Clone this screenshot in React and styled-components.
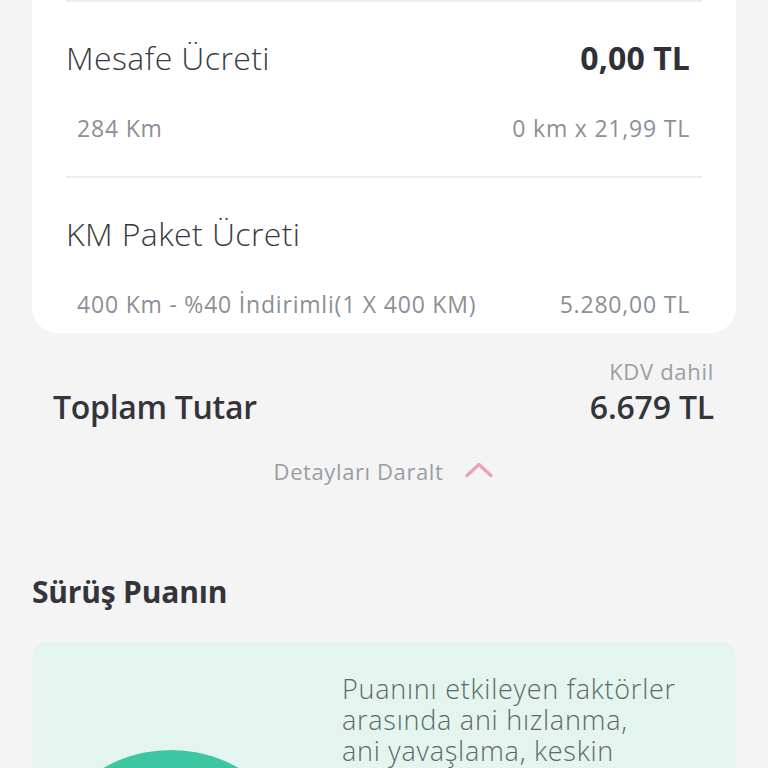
import React from "react";
import styled, { createGlobalStyle } from "styled-components";

const GlobalStyle = createGlobalStyle`
  html, body {
    margin: 0;
    padding: 0;
    background: #f4f4f5;
    font-family: "Open Sans", "Noto Sans", sans-serif;
    overflow: hidden;
  }
`;

const priceItems = [
  {
    title: "Mesafe Ücreti",
    value: "0,00 TL",
    detail: "284 Km",
    detailValue: "0 km x 21,99 TL",
  },
  {
    title: "KM Paket Ücreti",
    value: "",
    detail: "400 Km - %40 İndirimli(1 X 400 KM)",
    detailValue: "5.280,00 TL",
  },
];

const scoreLines = [
  "Puanını etkileyen faktörler",
  "arasında ani hızlanma,",
  "ani yavaşlama, keskin",
];

const App = () => {
  return (
    <Page>
      <GlobalStyle />
      <PriceCard>
        {priceItems.map((item) => (
          <PriceSection key={item.title}>
            <TitleRow>
              <ItemTitle>{item.title}</ItemTitle>
              <ItemValue>{item.value}</ItemValue>
            </TitleRow>
            <DetailRow>
              <span>{item.detail}</span>
              <span>{item.detailValue}</span>
            </DetailRow>
          </PriceSection>
        ))}
      </PriceCard>

      <TotalBlock>
        <TaxNote>KDV dahil</TaxNote>
        <TotalRow>
          <TotalLabel>Toplam Tutar</TotalLabel>
          <TotalValue>6.679 TL</TotalValue>
        </TotalRow>
      </TotalBlock>

      <CollapseButton>
        Detayları Daralt
        <svg width="30" height="17" viewBox="0 0 30 17">
          <polyline
            points="3,14.5 15,3.5 27,14.5"
            fill="none"
            stroke="#eba3b5"
            strokeWidth="3.4"
            strokeLinecap="round"
            strokeLinejoin="round"
          />
        </svg>
      </CollapseButton>

      <SectionHeading>Sürüş Puanın</SectionHeading>

      <ScoreCard>
        <GaugeColumn>
          <Gauge />
        </GaugeColumn>
        <ScoreText>
          {scoreLines.map((line) => (
            <ScoreLine key={line}>{line}</ScoreLine>
          ))}
        </ScoreText>
      </ScoreCard>
    </Page>
  );
};

const Page = styled.div`
  padding: 0 32px;
  height: 768px;
  box-sizing: border-box;
`;

const PriceCard = styled.div`
  background: #ffffff;
  border-radius: 0 0 26px 26px;
  padding: 0 34px;
`;

const PriceSection = styled.div`
  border-top: 2px solid #ededee;
  padding: 35px 0 33px;

  &:last-child {
    padding-bottom: 14px;
  }
`;

const TitleRow = styled.div`
  display: flex;
  justify-content: space-between;
  align-items: center;
  height: 40px;
`;

const ItemTitle = styled.span`
  font-size: 32px;
  font-weight: 300;
  color: #383b41;
  letter-spacing: 0.4px;
`;

const ItemValue = styled.span`
  font-size: 32px;
  font-weight: 700;
  color: #2f3137;
  margin-right: 12px;
  letter-spacing: 0.1px;
`;

const DetailRow = styled.div`
  display: flex;
  justify-content: space-between;
  align-items: center;
  height: 30px;
  margin-top: 36px;
  padding: 0 12px 0 11px;
  font-size: 23px;
  font-weight: 400;
  color: #8a9095;
  letter-spacing: 0.8px;
`;

const TotalBlock = styled.div`
  padding: 0 22px 0 21px;
  margin-top: 25px;
  display: flex;
  flex-direction: column;
`;

const TaxNote = styled.div`
  align-self: flex-end;
  font-size: 22px;
  line-height: 26px;
  color: #9a9ea2;
  letter-spacing: 0.7px;
`;

const TotalRow = styled.div`
  display: flex;
  justify-content: space-between;
  align-items: center;
  height: 44px;
`;

const TotalLabel = styled.span`
  font-size: 32px;
  font-weight: 600;
  color: #33353b;
  letter-spacing: -0.3px;
`;

const TotalValue = styled.span`
  font-size: 32px;
  font-weight: 600;
  color: #33353b;
  letter-spacing: -0.2px;
`;

const CollapseButton = styled.div`
  display: flex;
  justify-content: center;
  align-items: center;
  gap: 21px;
  height: 30px;
  margin-top: 28px;
  font-size: 22px;
  color: #9a9ea2;
  letter-spacing: 0.6px;

  svg {
    margin-top: -4px;
  }
`;

const SectionHeading = styled.h2`
  margin: 86px 0 0;
  height: 40px;
  line-height: 40px;
  font-size: 30px;
  font-weight: 700;
  color: #33353b;
  letter-spacing: -0.2px;
`;

const ScoreCard = styled.div`
  margin-top: 30px;
  background: #e3f5ee;
  border-radius: 16px;
  display: grid;
  grid-template-columns: 310px 1fr;
  padding: 31px 40px 40px 0;
  height: 300px;
  overflow: hidden;
`;

const GaugeColumn = styled.div`
  display: flex;
  justify-content: center;
  padding: 77px 32px 0 0;
`;

const Gauge = styled.div`
  width: 272px;
  height: 272px;
  border-radius: 50%;
  background: #3ec5a1;
  flex-shrink: 0;
`;

const ScoreText = styled.div`
  display: flex;
  flex-direction: column;
`;

const ScoreLine = styled.span`
  font-size: 27px;
  line-height: 31px;
  font-weight: 300;
  color: #5b6b67;
  letter-spacing: 0.75px;
  white-space: nowrap;
`;

export default App;
